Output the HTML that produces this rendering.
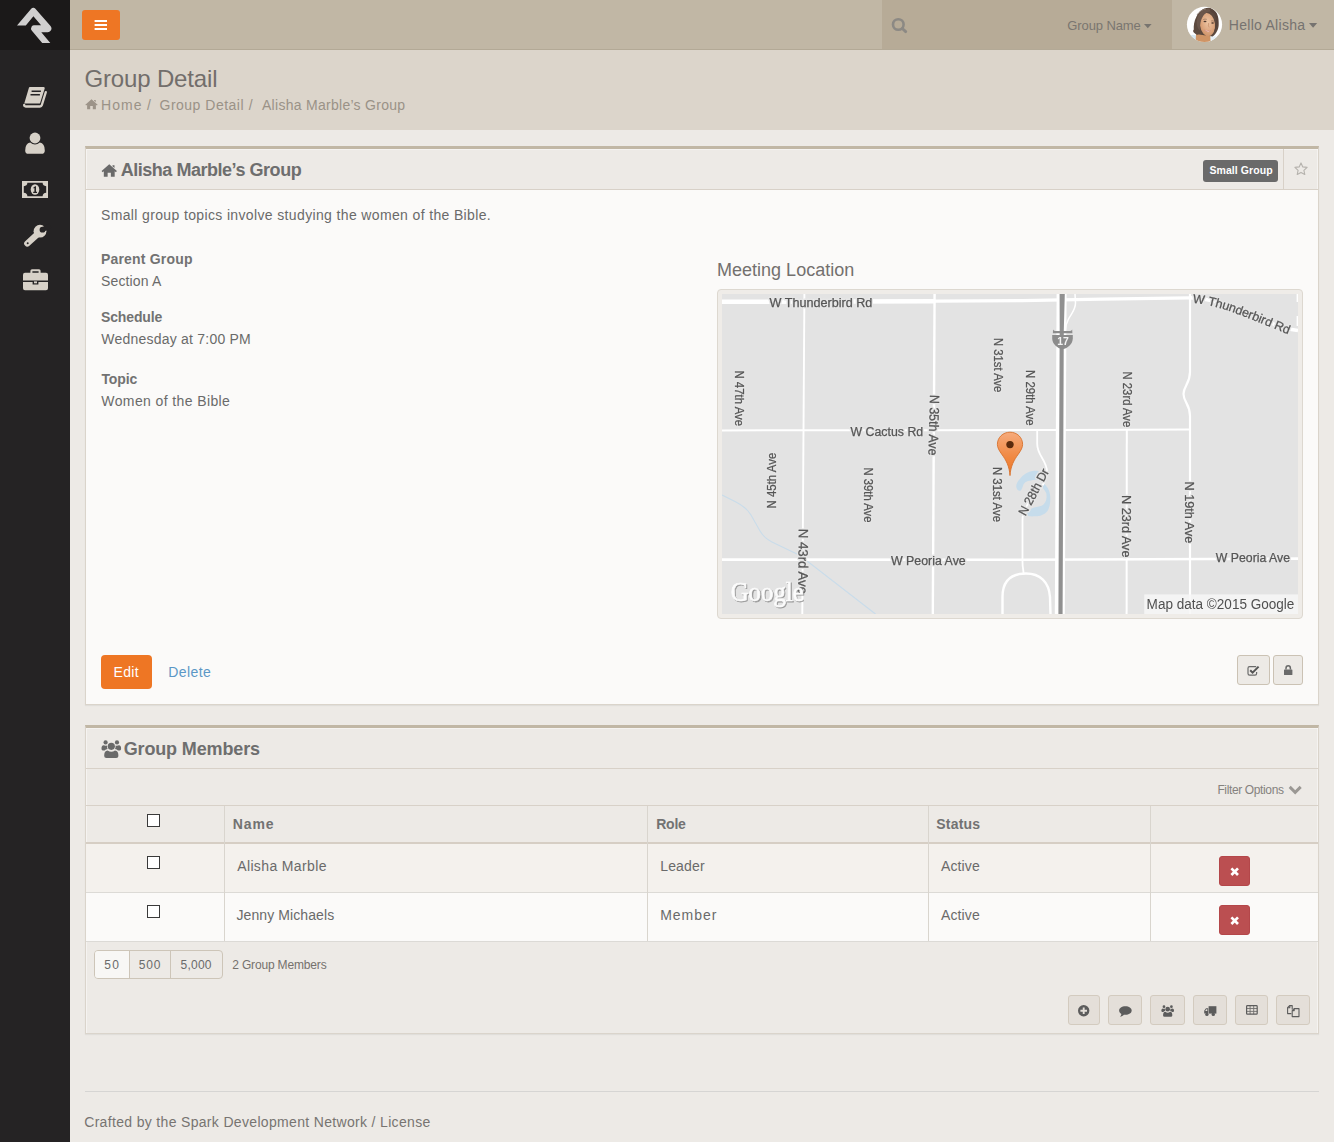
<!DOCTYPE html>
<html lang="en">
<head>
<meta charset="utf-8">
<title>Group Detail</title>
<style>
html,body{margin:0;padding:0}
body{width:1334px;height:1142px;position:relative;overflow:hidden;background:#edeae6;font-family:"Liberation Sans",sans-serif;color:#6a6a6a}
.t{position:absolute;white-space:nowrap;line-height:1}
svg{display:block;overflow:visible}

</style>
</head>
<body>
<!-- sidebar -->
<div style="position:absolute;left:0px;top:0px;width:70px;height:1142px;background:#252324"></div>
<div style="position:absolute;left:0px;top:0px;width:70px;height:50px;background:#1b1919"></div>
<svg style="position:absolute;left:0px;top:0px;" width="70" height="50" viewBox="0 0 70 50"><path fill="#d0cfcf" d="M33.2,7.8 Q34.4,7.6 35.4,8.8 L50.3,25.8 Q52.6,28.6 50.6,30.8 Q49.6,32.2 47.8,32.2 L41.3,32.2 L50.3,42.9 L42.2,42.9 L31.9,30.7 Q30.2,28.4 31.7,26.4 Q32.6,25.2 34,25.2 L41.1,25.2 L33.4,16.2 L25.8,25.4 L17,25.4 L31.2,8.8 Q32.1,7.8 33.2,7.8 Z"/></svg>
<!-- navbar -->
<div style="position:absolute;left:70px;top:0px;width:1264px;height:49px;background:#c1b7a5;border-bottom:1px solid #b3a996"></div>
<div style="position:absolute;left:882px;top:0px;width:290px;height:49px;background:#b7ab97"></div>
<div style="position:absolute;left:82px;top:10px;width:38px;height:30px;background:#ee7624;border-radius:3px"></div>
<svg style="position:absolute;left:82px;top:10px;" width="38" height="30" viewBox="0 0 38 30"><rect x="12.6" y="10" width="12.4" height="2" fill="#fff"/><rect x="12.6" y="14" width="12.4" height="2" fill="#fff"/><rect x="12.6" y="18" width="12.4" height="2" fill="#fff"/></svg>
<svg style="position:absolute;left:890px;top:16px;" width="20" height="20" viewBox="0 0 20 20"><circle cx="8.3" cy="8.5" r="5.3" fill="none" stroke="#8c8984" stroke-width="2.6"/><path d="M12.3,12.5 L15.7,15.6" stroke="#8c8984" stroke-width="2.9" stroke-linecap="round"/></svg>
<span class="t" style="left:1067.3px;top:19px;font-size:13px;color:#7a7670;letter-spacing:-0.11px;">Group Name</span>
<svg style="position:absolute;left:1144px;top:24px;" width="8" height="5" viewBox="0 0 8 5"><path d="M0,0 L7.6,0 L3.8,4.2 Z" fill="#77746f"/></svg>
<svg style="position:absolute;left:1186px;top:6px;" width="37" height="37" viewBox="0 0 37 37"><defs><clipPath id="av"><circle cx="18.5" cy="18.4" r="17.6"/></clipPath>
<radialGradient id="sk" cx="0.55" cy="0.4" r="0.7"><stop offset="0" stop-color="#ecc4a3"/><stop offset="0.6" stop-color="#dca57d"/><stop offset="1" stop-color="#c98d62"/></radialGradient></defs>
<circle cx="18.5" cy="18.4" r="17.6" fill="#fefefe"/>
<g clip-path="url(#av)">
<path d="M1,31 C5,27.8 9.5,28.4 12,31 L12,38 L1,38 Z" fill="#d6e6ef"/>
<path d="M23,31.4 C27,29.6 31,30 35,33.4 L35,38 L23,38 Z" fill="#e6f0f5"/>
<path d="M10.2,26 L24.2,27 L24.6,38 L9.4,38 Z" fill="#cf9465"/>
<path d="M23,1.8 C17,1.5 13,6 10.5,10.5 C8,15 7.5,20 7.8,23.6 C6.6,24.6 7,26.6 9,27.4 C10,28.6 11.4,29 13,28.6 L26.6,30.6 C30.4,28 32.5,23 32.7,19 C33,13 32,8 29,5 C27,3 25,2 23,1.8 Z" fill="#5c493e"/>
<ellipse cx="21.5" cy="18.6" rx="7.5" ry="11.6" fill="url(#sk)" transform="rotate(-7 21.5 18.6)"/>
<path d="M24.4,5.6 C19.4,6 16.8,10 15.2,14 C14,17.6 13.8,21 14,24.4 C11,22 9.8,17 11.4,12 C13,7 17,2.6 23.4,2.6 Z" fill="#6a564b"/>
<path d="M24.4,5.6 C27.4,6.4 29.3,9 29.8,13 C30.2,17 29.7,21 28.3,25.6 C31,22 32.2,18 31.9,13 C31.5,8 28.4,4 24.4,3.6 Z" fill="#55423a"/>
<path d="M11,9 C13,5.6 16.6,3.4 20,3" stroke="#8c7c72" stroke-width="0.9" fill="none"/>
<ellipse cx="19" cy="15.4" rx="1.5" ry="0.75" fill="#4e392e"/><ellipse cx="26.6" cy="17.1" rx="1.4" ry="0.75" fill="#4e392e"/>
<path d="M17.2,13.6 Q19,12.6 20.8,13.4 M25,15 Q26.8,14.4 28.4,15.4" stroke="#8a6a55" stroke-width="0.6" fill="none"/>
<path d="M17.6,23.4 Q21,27.6 25.4,24.6 Q21.4,25 17.6,23.4 Z" fill="#cf7f7c"/>
<path d="M18.6,24 Q21.4,26.4 24.4,24.8 Q21.4,25.2 18.6,24 Z" fill="#fbf6ee"/>
<path d="M22.6,17 Q22,20.4 23.2,21.4" stroke="#c48d68" stroke-width="0.7" fill="none"/>
</g></svg>
<span class="t" style="left:1228.8px;top:18px;font-size:14px;color:#767370;letter-spacing:0.28px;">Hello Alisha</span>
<svg style="position:absolute;left:1309px;top:23px;" width="8" height="5" viewBox="0 0 8 5"><path d="M0,0 L8.2,0 L4.1,4.8 Z" fill="#767370"/></svg>
<!-- page title -->
<div style="position:absolute;left:70px;top:50px;width:1264px;height:80px;background:#dcd5cb"></div>
<span class="t" style="left:84.5px;top:67px;font-size:24px;color:#726e6b;letter-spacing:-0.16px;">Group Detail</span>
<svg style="position:absolute;left:85px;top:98px;" width="13" height="12" viewBox="0 0 16 14.4"><path fill="#9c9388" d="M8,1.2 L15.6,8 L14.6,9.1 L13.4,8.1 L13.4,13.6 L9.6,13.6 L9.6,9.6 L6.4,9.6 L6.4,13.6 L2.6,13.6 L2.6,8.1 L1.4,9.1 L0.4,8 L8,1.2 Z M11.2,2.3 L13.2,2.3 L13.2,5 L11.2,3.3 Z"/></svg>
<span class="t" style="left:101px;top:98px;font-size:14px;color:#9a9287;letter-spacing:1.07px;">Home</span>
<span class="t" style="left:147px;top:98px;font-size:14px;color:#9a9287;letter-spacing:0px;">/</span>
<span class="t" style="left:159.5px;top:98px;font-size:14px;color:#9a9287;letter-spacing:0.5px;">Group Detail</span>
<span class="t" style="left:248.8px;top:98px;font-size:14px;color:#9a9287;letter-spacing:0px;">/</span>
<span class="t" style="left:262px;top:98px;font-size:14px;color:#9a9287;letter-spacing:0.28px;">Alisha Marble’s Group</span>
<!-- panel 1 -->
<div style="position:absolute;left:85px;top:146px;width:1234px;height:559px;box-sizing:border-box;background:#fbfaf9;border:1px solid #dad4cb;border-top:3px solid #c1b7a5;box-shadow:0 1px 1px rgba(0,0,0,0.05)"></div>
<div style="position:absolute;left:86px;top:149px;width:1232px;height:40px;background:#edeae6;border-bottom:1px solid #d8d1c8;box-shadow:inset 1px 1px 0 rgba(255,255,255,0.45),inset -1px 0 0 rgba(255,255,255,0.45)"></div>
<svg style="position:absolute;left:101px;top:162.5px;" width="16.5" height="14.5" viewBox="0 0 16 14.4"><path fill="#6a6a6a" d="M8,1.2 L15.6,8 L14.6,9.1 L13.4,8.1 L13.4,13.6 L9.6,13.6 L9.6,9.6 L6.4,9.6 L6.4,13.6 L2.6,13.6 L2.6,8.1 L1.4,9.1 L0.4,8 L8,1.2 Z M11.2,2.3 L13.2,2.3 L13.2,5 L11.2,3.3 Z"/></svg>
<span class="t" style="left:120.7px;top:161px;font-size:18px;font-weight:700;color:#6e6e6e;letter-spacing:-0.47px;">Alisha Marble’s Group</span>
<div style="position:absolute;left:1203px;top:160px;width:75px;height:22px;background:#6a6a6a;border-radius:3px"></div>
<span class="t" style="left:1209.4px;top:165px;font-size:10.5px;font-weight:700;color:#fff;letter-spacing:0.09px;">Small Group</span>
<div style="position:absolute;left:1283px;top:149px;width:1px;height:40px;background:#d8d1c8"></div>
<svg style="position:absolute;left:1294px;top:162px;" width="14" height="13" viewBox="0 0 14 13"><path d="M7,0.9 L8.8,4.9 L13.1,5.4 L9.9,8.3 L10.8,12.5 L7,10.4 L3.2,12.5 L4.1,8.3 L0.9,5.4 L5.2,4.9 Z" fill="none" stroke="#b5b2ad" stroke-width="1.1" stroke-linejoin="round"/></svg>
<span class="t" style="left:101px;top:208px;font-size:14px;color:#6a6a6a;letter-spacing:0.36px;">Small group topics involve studying the women of the Bible.</span>
<span class="t" style="left:101px;top:252px;font-size:14px;font-weight:700;color:#727272;letter-spacing:0.18px;">Parent Group</span>
<span class="t" style="left:101px;top:274px;font-size:14px;color:#6a6a6a;letter-spacing:0.15px;">Section A</span>
<span class="t" style="left:101px;top:310px;font-size:14px;font-weight:700;color:#727272;letter-spacing:-0.14px;">Schedule</span>
<span class="t" style="left:101.3px;top:332px;font-size:14px;color:#6a6a6a;letter-spacing:0.22px;">Wednesday at 7:00 PM</span>
<span class="t" style="left:101.4px;top:372px;font-size:14px;font-weight:700;color:#727272;letter-spacing:-0.1px;">Topic</span>
<span class="t" style="left:101.3px;top:394px;font-size:14px;color:#6a6a6a;letter-spacing:0.39px;">Women of the Bible</span>
<span class="t" style="left:717px;top:261px;font-size:18px;color:#73706e;letter-spacing:0.01px;">Meeting Location</span>
<div style="position:absolute;left:101px;top:655px;width:51px;height:34px;background:#ee7624;border-radius:4px"></div>
<span class="t" style="left:113.5px;top:665px;font-size:14px;color:#fff;letter-spacing:0.33px;">Edit</span>
<span class="t" style="left:168.2px;top:665px;font-size:14px;color:#5b97c6;letter-spacing:0.44px;">Delete</span>
<div style="position:absolute;left:1237px;top:655px;width:33px;height:30px;box-sizing:border-box;background:#edeae6;border:1px solid #cbc2b4;border-radius:3px"></div>
<div style="position:absolute;left:1273px;top:655px;width:30px;height:30px;box-sizing:border-box;background:#edeae6;border:1px solid #cbc2b4;border-radius:3px"></div>
<svg style="position:absolute;left:1247px;top:664.5px;" width="13" height="11" viewBox="0 0 13 11"><path d="M9.2,1.6 L2.6,1.6 Q1,1.6 1,3.2 L1,8.6 Q1,10.2 2.6,10.2 L8,10.2 Q9.6,10.2 9.6,8.6 L9.6,7" fill="none" stroke="#6a6a6a" stroke-width="1.2"/><path d="M3.2,5.2 L5.6,7.6 L11.6,1.6" fill="none" stroke="#555" stroke-width="2"/></svg>
<svg style="position:absolute;left:1284px;top:665px;" width="8.4" height="10" viewBox="0 0 8.4 10"><path d="M2,4.6 L2,3.2 Q2,0.8 4.2,0.8 Q6.4,0.8 6.4,3.2 L6.4,4.6" fill="none" stroke="#6a6a6a" stroke-width="1.5"/><rect x="0" y="4.4" width="8.4" height="5.6" rx="0.6" fill="#6a6a6a"/></svg>
<svg style="position:absolute;left:23px;top:86px;" width="25" height="23" viewBox="0 0 25 23"><path fill="#d7d1c8" d="M6.9,0.9 L20.6,0.9 Q22.2,0.9 21.7,2.4 L17.1,17 Q16.9,17.6 16.2,17.6 L1.8,17.6 Q1.2,17.6 1.4,17 L6,1.6 Q6.2,0.9 6.9,0.9 Z"/>
<path d="M22.8,6.2 L18.8,19.2 Q18.4,20.5 17,20.5 L2.8,20.5 Q0.9,20.5 1.2,18.8" fill="none" stroke="#d7d1c8" stroke-width="2.3" stroke-linecap="round"/>
<path d="M8.6,5.2 L17.9,5.2 M7.5,8.7 L16.9,8.7" stroke="#252324" stroke-width="1.4"/></svg>
<svg style="position:absolute;left:25px;top:132px;" width="20" height="22" viewBox="0 0 20 22"><g fill="#d7d1c8"><circle cx="10" cy="6" r="5.4"/><path d="M0.2,18.4 Q0.2,11.6 5.2,10.6 Q7.4,12.6 10,12.6 Q12.6,12.6 14.8,10.6 Q19.8,11.6 19.8,18.4 Q19.8,21.8 16.6,21.8 L3.4,21.8 Q0.2,21.8 0.2,18.4 Z"/></g></svg>
<svg style="position:absolute;left:22px;top:181px;" width="26" height="17" viewBox="0 0 26 17"><rect x="0" y="0" width="26" height="17" fill="#d7d1c8"/>
<path d="M5.4,1.8 L20.6,1.8 Q20.8,5 24.2,5.2 L24.2,11.8 Q20.8,12 20.6,15.2 L5.4,15.2 Q5.2,12 1.8,11.8 L1.8,5.2 Q5.2,5 5.4,1.8 Z" fill="#252324"/>
<ellipse cx="13" cy="8.5" rx="4.3" ry="5.2" fill="#d7d1c8"/>
<path d="M11.4,6.6 L13.2,5.2 L14,5.2 L14,10.8 L15,10.8 L15,11.9 L11.2,11.9 L11.2,10.8 L12.4,10.8 L12.4,7 L11.4,7.6 Z" fill="#252324"/></svg>
<svg style="position:absolute;left:23px;top:225px;" width="24" height="23" viewBox="0 0 24 23"><path d="M4.3,18.5 L14,9.6" stroke="#d7d1c8" stroke-width="6.2" stroke-linecap="round"/>
<circle cx="17" cy="6.2" r="6.4" fill="#d7d1c8"/>
<path d="M19.6,4.6 L27.4,0.7" stroke="#252324" stroke-width="4.8"/>
<circle cx="19.5" cy="4.7" r="2.9" fill="#252324"/>
<circle cx="4.7" cy="18.2" r="1" fill="#252324"/></svg>
<svg style="position:absolute;left:22.5px;top:269px;" width="25" height="21.5" viewBox="0 0 25 21.5"><g fill="#d7d1c8"><path d="M7.4,4.4 L7.4,1.8 Q7.4,0.2 9,0.2 L16,0.2 Q17.6,0.2 17.6,1.8 L17.6,4.4 L15.6,4.4 L15.6,2.2 L9.4,2.2 L9.4,4.4 Z"/>
<path d="M2,3.8 L23,3.8 Q25,3.8 25,5.8 L25,11.6 L0,11.6 L0,5.8 Q0,3.8 2,3.8 Z"/>
<path d="M0,13 L9.6,13 L9.6,15.6 L15.4,15.6 L15.4,13 L25,13 L25,19.2 Q25,21.2 23,21.2 L2,21.2 Q0,21.2 0,19.2 Z"/>
<rect x="11" y="12.4" width="3" height="1.9"/></g></svg>
<!-- panel 2 -->
<div style="position:absolute;left:85px;top:725px;width:1234px;height:309px;box-sizing:border-box;background:#edeae6;border:1px solid #dad4cb;border-top:3px solid #c1b7a5;box-shadow:0 1px 1px rgba(0,0,0,0.05),inset 1px 1px 0 rgba(255,255,255,0.45),inset -1px 0 0 rgba(255,255,255,0.45)"></div>
<div style="position:absolute;left:86px;top:768px;width:1232px;height:1px;background:#d8d1c8"></div>
<div style="position:absolute;left:86px;top:805px;width:1232px;height:1px;background:#d8d1c8"></div>
<div style="position:absolute;left:86px;top:842px;width:1232px;height:2px;background:#d6cec4"></div>
<div style="position:absolute;left:86px;top:844px;width:1232px;height:48px;background:#f4f1ed"></div>
<div style="position:absolute;left:86px;top:892px;width:1232px;height:1px;background:#dcdad6"></div>
<div style="position:absolute;left:86px;top:893px;width:1232px;height:48px;background:#fbfaf9"></div>
<div style="position:absolute;left:86px;top:941px;width:1232px;height:1px;background:#dcdad6"></div>
<div style="position:absolute;left:224px;top:806px;width:1px;height:135px;background:#d9d5ce"></div>
<div style="position:absolute;left:647px;top:806px;width:1px;height:135px;background:#d9d5ce"></div>
<div style="position:absolute;left:928px;top:806px;width:1px;height:135px;background:#d9d5ce"></div>
<div style="position:absolute;left:1150px;top:806px;width:1px;height:135px;background:#d9d5ce"></div>
<svg style="position:absolute;left:100.6px;top:739.6px;" width="20.6" height="18.2" viewBox="0 0 20.6 18.2"><g fill="#6a6a6a"><circle cx="10.3" cy="6.3" r="3.6"/><path d="M3.2,16 Q3,10.8 6.6,10.4 Q10.3,13 14,10.4 Q17.6,10.8 17.4,16 Q17.4,18.1 15.2,18.1 L5.4,18.1 Q3.2,18.1 3.2,16 Z"/>
<circle cx="4.6" cy="2.4" r="2.1"/><circle cx="16" cy="2.4" r="2.1"/>
<path d="M0.5,8.8 Q0.4,5.4 2.6,5.2 Q4.4,6 6,5.4 Q5.8,7.6 6.6,9 Q4.6,9.2 3.6,10.6 L1.8,10.6 Q0.5,10.4 0.5,8.8 Z"/>
<path d="M20.1,8.8 Q20.2,5.4 18,5.2 Q16.2,6 14.6,5.4 Q14.8,7.6 14,9 Q16,9.2 17,10.6 L18.8,10.6 Q20.1,10.4 20.1,8.8 Z"/></g></svg>
<span class="t" style="left:123.7px;top:740px;font-size:18px;font-weight:700;color:#6e6e6e;letter-spacing:-0.14px;">Group Members</span>
<span class="t" style="left:1217.4px;top:784px;font-size:12px;color:#85827e;letter-spacing:-0.37px;">Filter Options</span>
<svg style="position:absolute;left:1288px;top:784.8px;" width="14.5" height="10" viewBox="0 0 14.5 10"><path d="M1.7,1.9 L7.2,7.4 L12.7,1.9" fill="none" stroke="#9b9894" stroke-width="2.9"/></svg>
<span class="t" style="left:232.8px;top:817px;font-size:14px;font-weight:700;color:#727272;letter-spacing:0.87px;">Name</span>
<span class="t" style="left:656.2px;top:817px;font-size:14px;font-weight:700;color:#727272;letter-spacing:-0.23px;">Role</span>
<span class="t" style="left:936.3px;top:817px;font-size:14px;font-weight:700;color:#727272;letter-spacing:0.2px;">Status</span>
<div style="position:absolute;left:147px;top:814px;width:13px;height:13px;box-sizing:border-box;background:#fff;border:1px solid #3a3a3a"></div>
<div style="position:absolute;left:147px;top:856px;width:13px;height:13px;box-sizing:border-box;background:#fff;border:1px solid #3a3a3a"></div>
<div style="position:absolute;left:147px;top:905px;width:13px;height:13px;box-sizing:border-box;background:#fff;border:1px solid #3a3a3a"></div>
<span class="t" style="left:237.2px;top:859px;font-size:14px;color:#6a6a6a;letter-spacing:0.37px;">Alisha Marble</span>
<span class="t" style="left:660.2px;top:859px;font-size:14px;color:#6a6a6a;letter-spacing:0.16px;">Leader</span>
<span class="t" style="left:941px;top:859px;font-size:14px;color:#6a6a6a;letter-spacing:0.12px;">Active</span>
<span class="t" style="left:236.5px;top:908px;font-size:14px;color:#6a6a6a;letter-spacing:0.09px;">Jenny Michaels</span>
<span class="t" style="left:660.2px;top:908px;font-size:14px;color:#6a6a6a;letter-spacing:0.96px;">Member</span>
<span class="t" style="left:941px;top:908px;font-size:14px;color:#6a6a6a;letter-spacing:0.12px;">Active</span>
<div style="position:absolute;left:1219px;top:856px;width:31px;height:30px;box-sizing:border-box;background:#bb4f51;border:1px solid #b4474a;border-radius:3px"></div>
<svg style="position:absolute;left:1229.7px;top:867.4px;" width="9.4" height="9.4" viewBox="0 0 9.4 9.4"><path d="M1.4,1.4 L8,8 M8,1.4 L1.4,8" stroke="#fff" stroke-width="2.7"/></svg>
<div style="position:absolute;left:1219px;top:905px;width:31px;height:30px;box-sizing:border-box;background:#bb4f51;border:1px solid #b4474a;border-radius:3px"></div>
<svg style="position:absolute;left:1229.7px;top:916.4px;" width="9.4" height="9.4" viewBox="0 0 9.4 9.4"><path d="M1.4,1.4 L8,8 M8,1.4 L1.4,8" stroke="#fff" stroke-width="2.7"/></svg>
<div style="position:absolute;left:94px;top:950px;width:129px;height:29px;box-sizing:border-box;background:#edeae6;border:1px solid #cdc5b8;border-radius:4px"></div>
<div style="position:absolute;left:95px;top:951px;width:34px;height:27px;background:#f8f7f5;border-radius:3px 0 0 3px"></div>
<div style="position:absolute;left:129px;top:951px;width:1px;height:27px;background:#cdc5b8"></div>
<div style="position:absolute;left:170px;top:951px;width:1px;height:27px;background:#cdc5b8"></div>
<span class="t" style="left:104.2px;top:959px;font-size:12px;color:#6a6a6a;letter-spacing:1.5px;">50</span>
<span class="t" style="left:138.8px;top:959px;font-size:12px;color:#6a6a6a;letter-spacing:0.75px;">500</span>
<span class="t" style="left:180.6px;top:959px;font-size:12px;color:#6a6a6a;letter-spacing:0.23px;">5,000</span>
<span class="t" style="left:232.2px;top:959px;font-size:12px;color:#75716d;letter-spacing:-0.16px;">2 Group Members</span>
<div style="position:absolute;left:1068px;top:995px;width:32px;height:30px;box-sizing:border-box;background:#e4dfd9;border:1px solid #d3cbbf;border-radius:3px"></div>
<div style="position:absolute;left:1108px;top:995px;width:34px;height:30px;box-sizing:border-box;background:#e4dfd9;border:1px solid #d3cbbf;border-radius:3px"></div>
<div style="position:absolute;left:1150px;top:995px;width:35px;height:30px;box-sizing:border-box;background:#e4dfd9;border:1px solid #d3cbbf;border-radius:3px"></div>
<div style="position:absolute;left:1193px;top:995px;width:34px;height:30px;box-sizing:border-box;background:#e4dfd9;border:1px solid #d3cbbf;border-radius:3px"></div>
<div style="position:absolute;left:1235px;top:995px;width:33px;height:30px;box-sizing:border-box;background:#e4dfd9;border:1px solid #d3cbbf;border-radius:3px"></div>
<div style="position:absolute;left:1276px;top:995px;width:34px;height:30px;box-sizing:border-box;background:#e4dfd9;border:1px solid #d3cbbf;border-radius:3px"></div>
<svg style="position:absolute;left:1078.2px;top:1005.2px;" width="11.4" height="11.4" viewBox="0 0 11.4 11.4"><circle cx="5.7" cy="5.7" r="5.7" fill="#5c5c5c"/><path d="M5.7,2.4 L5.7,9 M2.4,5.7 L9,5.7" stroke="#e4dfd9" stroke-width="1.9"/></svg>
<svg style="position:absolute;left:1118.6px;top:1006px;" width="12.8" height="11" viewBox="0 0 12.8 11"><path fill="#5c5c5c" d="M6.4,0.2 C10,0.2 12.7,2.1 12.7,4.5 C12.7,6.9 10,8.8 6.4,8.8 C5.9,8.8 5.4,8.76 4.9,8.7 C3.9,9.7 2.6,10.4 1,10.6 C1.8,9.8 2.3,8.9 2.4,7.9 C1,7.1 0.1,5.9 0.1,4.5 C0.1,2.1 2.8,0.2 6.4,0.2 Z"/></svg>
<svg style="position:absolute;left:1161px;top:1004.6px;" width="13.4" height="12" viewBox="0 0 20.6 18.2"><g fill="#5c5c5c"><circle cx="10.3" cy="6.3" r="3.6"/><path d="M3.2,16 Q3,10.8 6.6,10.4 Q10.3,13 14,10.4 Q17.6,10.8 17.4,16 Q17.4,18.1 15.2,18.1 L5.4,18.1 Q3.2,18.1 3.2,16 Z"/>
<circle cx="4.6" cy="2.4" r="2.1"/><circle cx="16" cy="2.4" r="2.1"/>
<path d="M0.5,8.8 Q0.4,5.4 2.6,5.2 Q4.4,6 6,5.4 Q5.8,7.6 6.6,9 Q4.6,9.2 3.6,10.6 L1.8,10.6 Q0.5,10.4 0.5,8.8 Z"/>
<path d="M20.1,8.8 Q20.2,5.4 18,5.2 Q16.2,6 14.6,5.4 Q14.8,7.6 14,9 Q16,9.2 17,10.6 L18.8,10.6 Q20.1,10.4 20.1,8.8 Z"/></g></svg>
<svg style="position:absolute;left:1204px;top:1006px;" width="12.4" height="10.4" viewBox="0 0 12.4 10.4"><g fill="#5c5c5c"><rect x="4.6" y="0.2" width="7.8" height="7.4"/><path d="M0.2,7.6 L0.2,4.8 L2,2.2 L4.2,2.2 L4.2,7.6 Z"/><circle cx="2.9" cy="8.4" r="1.7"/><circle cx="9.3" cy="8.4" r="1.7"/></g><path d="M1.2,5 L2.4,3.2 L3.3,3.2 L3.3,5 Z" fill="#e4dfd9"/></svg>
<svg style="position:absolute;left:1245.6px;top:1004.9px;" width="11.8" height="9.8" viewBox="0 0 11.8 9.8"><rect x="0.6" y="0.6" width="10.6" height="8.6" rx="0.8" fill="none" stroke="#5c5c5c" stroke-width="1.2"/><path d="M0.6,3.5 L11.2,3.5 M0.6,6.4 L11.2,6.4 M4.1,0.6 L4.1,9.2 M7.7,0.6 L7.7,9.2" stroke="#5c5c5c" stroke-width="0.9" opacity="0.85"/></svg>
<svg style="position:absolute;left:1286.6px;top:1004.8px;" width="12.6" height="12.2" viewBox="0 0 12.6 12.2"><g fill="none" stroke="#5c5c5c" stroke-width="1.1" stroke-linejoin="round"><path d="M5.2,4.6 L5.2,0.6 L2.6,0.6 L0.6,2.6 L0.6,8.6 L4.4,8.6"/><path d="M2.8,0.8 L2.8,2.8 L0.8,2.8"/><path d="M7.2,3.6 L12,3.6 L12,11.6 L5.2,11.6 L5.2,5.6 Z"/><path d="M7.2,3.8 L7.2,5.6 L5.4,5.6"/></g></svg>
<div style="position:absolute;left:85px;top:1091px;width:1234px;height:1px;background:#d6d5d3"></div>
<span class="t" style="left:84.2px;top:1115px;font-size:14px;color:#777471;letter-spacing:0.33px;">Crafted by the Spark Development Network / License</span>
<!-- map -->
<div style="position:absolute;left:717px;top:289px;width:586px;height:330px;box-sizing:border-box;background:#efece8;border:1px solid #ddd8d0;border-radius:4px"></div>
<svg style="position:absolute;left:722px;top:294px;" width="576" height="320" viewBox="0 0 576 320"><defs>
<linearGradient id="mk" x1="0" y1="0" x2="0" y2="1"><stop offset="0" stop-color="#f6ab7c"/><stop offset="0.55" stop-color="#f08a45"/><stop offset="1" stop-color="#ee7624"/></linearGradient>
<filter id="soft" x="-2%" y="-2%" width="104%" height="104%"><feGaussianBlur stdDeviation="0.35"/></filter>
<filter id="gsh" x="-10%" y="-20%" width="120%" height="150%"><feGaussianBlur stdDeviation="0.7"/></filter>
<clipPath id="mc"><rect x="0" y="0" width="576" height="320"/></clipPath>
</defs>
<g clip-path="url(#mc)"><g filter="url(#soft)">
<rect x="-6" y="-6" width="588" height="332" fill="#e3e3e3"/>
<path d="M0,201 L14,208 Q25,214 29,221 L38,237 Q42,244 50,248 L78,261.5 L153.5,320" fill="none" stroke="#c9dcea" stroke-width="1.1"/>
<path d="M315.5,176.8 C310,176 304,178.5 301,181.5 C297.5,185 294,189 294.2,192.5 C294.5,196 297,197.5 298.8,196.5 C300.5,195 300.5,191 303,188.5 C306.5,186 312,186.5 315.5,185 C318,183.5 318.5,178 315.5,176.8 Z M321.8,189.5 C325,192 327.5,196 328,200.5 C328.8,207 328,213 325.5,217 C322.5,221 317,222.5 313,222.3 C309,222.5 305,222.5 304.6,220.5 C304.6,217.5 308,215 311.5,213.7 C315.5,212.5 320,212.5 322,210 C324.5,207 325,203 324.3,199.5 C323.5,196.5 320,194 320.3,192 C320.5,190.5 321,189.5 321.8,189.5 Z" fill="#c6dceb"/>
<g fill="none" stroke="#fff" stroke-linecap="butt">
<path d="M0,7.8 L213,7.2" stroke-width="4.6"/>
<path d="M213,7.2 L300,6.6 L380,5.2 L468,3.8" stroke-width="3.2"/>
<path d="M468,3.8 C500,5 530,20 560,34 L576,36.5" stroke-width="3.4"/>
<path d="M82.4,0 L80.3,320" stroke-width="1.9"/>
<path d="M212.6,0 L210.8,320" stroke-width="2.4"/>
<path d="M0,136.4 L213,136.2 L340,136 L468,135.4" stroke-width="2"/>
<path d="M0,265.6 L300,265.8 L576,264.6" stroke-width="2.6"/>
<path d="M468,0 L468,78 C468,90 461.5,92 461.5,100 C461.5,108 468,110 468,122 L468,320" stroke-width="2.2"/>
<path d="M404.8,136 L404.6,320" stroke-width="2"/>
<path d="M315.2,136 L315.2,150 C315.2,162 325,166 325,178 C325,196 300.5,206 300.5,226 L300.5,268 C300.5,274 301.5,276 301.5,279" stroke-width="1.8"/>
<path d="M280.5,320 L280.5,303 C280.5,286 290,279.5 304,279.5 C318,279.5 327,288 328,303 L328.5,320" stroke-width="2.4"/>
<path d="M353,0 L353.5,9 C353.5,16 349,20 346.5,25 C344.5,29 343.6,32 343.4,36" stroke-width="1.5"/>
<path d="M339.6,0 L337.8,320" stroke-width="10"/>
</g>
<path d="M337.6,0 L342.8,0 L341.8,36 L340.6,320 L336.4,320 L337.7,36 Z" fill="#909090"/>
<path d="M575.4,0 L575.4,8 M575.4,22 L575.4,32" stroke="#fff" stroke-width="1.6"/>
<g font-family="Liberation Sans, sans-serif" fill="#555" stroke="#e6e6e6" stroke-width="3" stroke-linejoin="round"><text x="47.6" y="13" font-size="12.5" textLength="102.8" lengthAdjust="spacingAndGlyphs">W Thunderbird Rd</text><text x="128.5" y="141.7" font-size="12.5" textLength="72.7" lengthAdjust="spacingAndGlyphs">W Cactus Rd</text><text x="169" y="270.7" font-size="12.5" textLength="74.7" lengthAdjust="spacingAndGlyphs">W Peoria Ave</text><text x="493.8" y="268.4" font-size="12.5" textLength="74.2" lengthAdjust="spacingAndGlyphs">W Peoria Ave</text><text transform="translate(13.299999999999999,76.4) rotate(90)" x="0" y="0" font-size="12.5" textLength="55.8" lengthAdjust="spacingAndGlyphs">N 47th Ave</text><text transform="translate(208.0,100.7) rotate(91.5)" x="0" y="0" font-size="13.5" textLength="60.7" lengthAdjust="spacingAndGlyphs">N 35th Ave</text><text transform="translate(271.90000000000003,44) rotate(90)" x="0" y="0" font-size="12.5" textLength="54.4" lengthAdjust="spacingAndGlyphs">N 31st Ave</text><text transform="translate(304.3,76) rotate(90)" x="0" y="0" font-size="12.5" textLength="55.7" lengthAdjust="spacingAndGlyphs">N 29th Ave</text><text transform="translate(400.5,77.5) rotate(90)" x="0" y="0" font-size="12.5" textLength="55.8" lengthAdjust="spacingAndGlyphs">N 23rd Ave</text><text transform="translate(141.6,173.5) rotate(90)" x="0" y="0" font-size="12.5" textLength="54.9" lengthAdjust="spacingAndGlyphs">N 39th Ave</text><text transform="translate(271.40000000000003,172.9) rotate(90)" x="0" y="0" font-size="12.5" textLength="55.1" lengthAdjust="spacingAndGlyphs">N 31st Ave</text><text transform="translate(76.8,234.7) rotate(90.5)" x="0" y="0" font-size="13.5" textLength="65.3" lengthAdjust="spacingAndGlyphs">N 43rd Ave</text><text transform="translate(399.7,201) rotate(90)" x="0" y="0" font-size="13.5" textLength="62.5" lengthAdjust="spacingAndGlyphs">N 23rd Ave</text><text transform="translate(463.2,187.5) rotate(90)" x="0" y="0" font-size="13.5" textLength="61.8" lengthAdjust="spacingAndGlyphs">N 19th Ave</text><text transform="translate(54.199999999999996,214.5) rotate(-90)" x="0" y="0" font-size="12.5" textLength="55.8" lengthAdjust="spacingAndGlyphs">N 45th Ave</text><text transform="translate(303.5,222.5) rotate(-62)" x="0" y="0" font-size="12.5" textLength="51" lengthAdjust="spacingAndGlyphs">N 28th Dr</text><text transform="translate(470.5,8.8) rotate(7.5)" font-size="12.5">W</text><text transform="translate(485.4,11.0) rotate(13.3)" font-size="12.5">T</text><text transform="translate(492.8,12.7) rotate(15.7)" font-size="12.5">h</text><text transform="translate(499.4,14.6) rotate(17.6)" font-size="12.5">u</text><text transform="translate(506.0,16.6) rotate(19.0)" font-size="12.5">n</text><text transform="translate(512.5,18.9) rotate(20.2)" font-size="12.5">d</text><text transform="translate(519.0,21.3) rotate(21.1)" font-size="12.5">e</text><text transform="translate(525.3,23.7) rotate(21.6)" font-size="12.5">r</text><text transform="translate(529.2,25.2) rotate(22.0)" font-size="12.5">b</text><text transform="translate(535.5,27.8) rotate(22.2)" font-size="12.5">i</text><text transform="translate(538.1,28.8) rotate(22.3)" font-size="12.5">r</text><text transform="translate(541.9,30.4) rotate(22.3)" font-size="12.5">d</text><text transform="translate(551.5,34.3) rotate(22.0)" font-size="12.5">R</text><text transform="translate(559.7,37.7) rotate(21.5)" font-size="12.5">d</text></g>
<g font-family="Liberation Sans, sans-serif" fill="#555" stroke="#555" stroke-width="0.25"><text x="47.6" y="13" font-size="12.5" textLength="102.8" lengthAdjust="spacingAndGlyphs">W Thunderbird Rd</text><text x="128.5" y="141.7" font-size="12.5" textLength="72.7" lengthAdjust="spacingAndGlyphs">W Cactus Rd</text><text x="169" y="270.7" font-size="12.5" textLength="74.7" lengthAdjust="spacingAndGlyphs">W Peoria Ave</text><text x="493.8" y="268.4" font-size="12.5" textLength="74.2" lengthAdjust="spacingAndGlyphs">W Peoria Ave</text><text transform="translate(13.299999999999999,76.4) rotate(90)" x="0" y="0" font-size="12.5" textLength="55.8" lengthAdjust="spacingAndGlyphs">N 47th Ave</text><text transform="translate(208.0,100.7) rotate(91.5)" x="0" y="0" font-size="13.5" textLength="60.7" lengthAdjust="spacingAndGlyphs">N 35th Ave</text><text transform="translate(271.90000000000003,44) rotate(90)" x="0" y="0" font-size="12.5" textLength="54.4" lengthAdjust="spacingAndGlyphs">N 31st Ave</text><text transform="translate(304.3,76) rotate(90)" x="0" y="0" font-size="12.5" textLength="55.7" lengthAdjust="spacingAndGlyphs">N 29th Ave</text><text transform="translate(400.5,77.5) rotate(90)" x="0" y="0" font-size="12.5" textLength="55.8" lengthAdjust="spacingAndGlyphs">N 23rd Ave</text><text transform="translate(141.6,173.5) rotate(90)" x="0" y="0" font-size="12.5" textLength="54.9" lengthAdjust="spacingAndGlyphs">N 39th Ave</text><text transform="translate(271.40000000000003,172.9) rotate(90)" x="0" y="0" font-size="12.5" textLength="55.1" lengthAdjust="spacingAndGlyphs">N 31st Ave</text><text transform="translate(76.8,234.7) rotate(90.5)" x="0" y="0" font-size="13.5" textLength="65.3" lengthAdjust="spacingAndGlyphs">N 43rd Ave</text><text transform="translate(399.7,201) rotate(90)" x="0" y="0" font-size="13.5" textLength="62.5" lengthAdjust="spacingAndGlyphs">N 23rd Ave</text><text transform="translate(463.2,187.5) rotate(90)" x="0" y="0" font-size="13.5" textLength="61.8" lengthAdjust="spacingAndGlyphs">N 19th Ave</text><text transform="translate(54.199999999999996,214.5) rotate(-90)" x="0" y="0" font-size="12.5" textLength="55.8" lengthAdjust="spacingAndGlyphs">N 45th Ave</text><text transform="translate(303.5,222.5) rotate(-62)" x="0" y="0" font-size="12.5" textLength="51" lengthAdjust="spacingAndGlyphs">N 28th Dr</text><text transform="translate(470.5,8.8) rotate(7.5)" font-size="12.5">W</text><text transform="translate(485.4,11.0) rotate(13.3)" font-size="12.5">T</text><text transform="translate(492.8,12.7) rotate(15.7)" font-size="12.5">h</text><text transform="translate(499.4,14.6) rotate(17.6)" font-size="12.5">u</text><text transform="translate(506.0,16.6) rotate(19.0)" font-size="12.5">n</text><text transform="translate(512.5,18.9) rotate(20.2)" font-size="12.5">d</text><text transform="translate(519.0,21.3) rotate(21.1)" font-size="12.5">e</text><text transform="translate(525.3,23.7) rotate(21.6)" font-size="12.5">r</text><text transform="translate(529.2,25.2) rotate(22.0)" font-size="12.5">b</text><text transform="translate(535.5,27.8) rotate(22.2)" font-size="12.5">i</text><text transform="translate(538.1,28.8) rotate(22.3)" font-size="12.5">r</text><text transform="translate(541.9,30.4) rotate(22.3)" font-size="12.5">d</text><text transform="translate(551.5,34.3) rotate(22.0)" font-size="12.5">R</text><text transform="translate(559.7,37.7) rotate(21.5)" font-size="12.5">d</text></g>
<path d="M331,35.6 Q331.6,37 333,37 L348.2,37 Q349.6,37 350.2,35.6 L350.4,39.3 L330.9,39.3 Z" fill="#8c8c8c"/>
<path d="M330.2,41 L350.8,41 L350.8,44.4 C350.6,50 346,54 340.5,55.3 C335,54 330.4,50 330.2,44.4 Z" fill="#8c8c8c"/>
<text x="341.1" y="51.2" font-family="Liberation Sans, sans-serif" font-size="11" font-weight="700" fill="#f4f4f4" text-anchor="middle" textLength="11.6" lengthAdjust="spacingAndGlyphs">17</text>
<path d="M288,181.6 C287.4,172 284,166 279.6,160 C277,156.4 275.4,153.4 275.4,150.4 C275.4,143.4 281,138.2 288,138.2 C295,138.2 300.6,143.4 300.6,150.4 C300.6,153.4 299,156.4 296.4,160 C292,166 288.6,172 288,181.6 Z" fill="url(#mk)" stroke="#d8722d" stroke-width="0.9"/>
<circle cx="288" cy="150.6" r="3.7" fill="#5a2b0c"/>
<text x="9.8" y="308.2" font-family="Liberation Serif, serif" font-size="27" fill="#6e6e6e" stroke="#6e6e6e" stroke-width="0.8" opacity="0.6" filter="url(#gsh)" textLength="73" lengthAdjust="spacingAndGlyphs">Google</text>
<text x="8.7" y="307" font-family="Liberation Serif, serif" font-size="27" fill="#fcfcfc" stroke="#fcfcfc" stroke-width="0.7" textLength="73" lengthAdjust="spacingAndGlyphs">Google</text>
<rect x="422.2" y="300.4" width="153.8" height="19.6" fill="#f7f7f7" opacity="0.85"/>
<text x="424.6" y="314.6" font-family="Liberation Sans, sans-serif" font-size="14" fill="#505050" textLength="147.8" lengthAdjust="spacingAndGlyphs">Map data ©2015 Google</text>
</g></g></svg>
</body>
</html>
